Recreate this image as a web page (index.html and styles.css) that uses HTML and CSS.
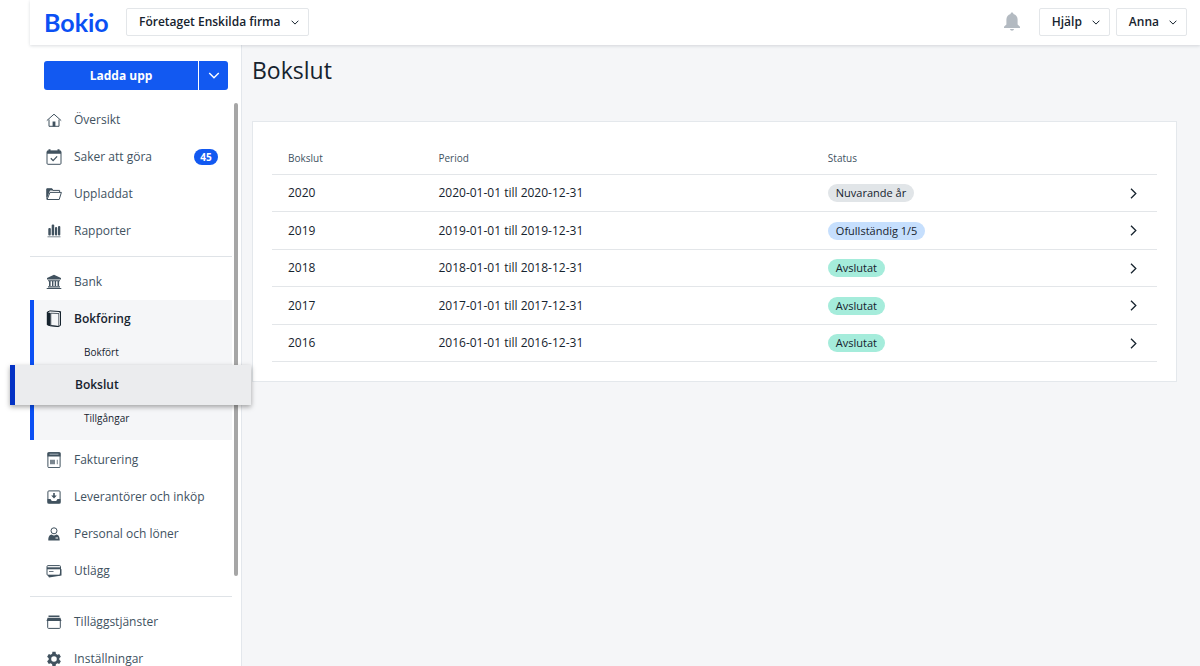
FILE: index.html
```html
<!DOCTYPE html>
<html lang="sv">
<head>
<meta charset="utf-8">
<meta name="viewport" content="width=device-width, initial-scale=1">
<title>Bokslut – Bokio</title>
<link rel="stylesheet" href="styles.css">
</head>
<body>
<svg class="defs" aria-hidden="true">
  <symbol id="chevron-down" viewBox="0 0 8 5"><path d="M.6.7 4 4.1 7.4.7" fill="none" stroke="currentColor"/></symbol>
  <symbol id="chevron-right" viewBox="0 0 7 11"><path d="M1 .8 5.8 5.5 1 10.2" fill="none" stroke="currentColor" stroke-width="1.3"/></symbol>
</svg>
<div class="app">
  <header class="topbar">
    <a class="logo" href="#">Bokio</a>
    <button class="menu-button" type="button" aria-haspopup="true">Företaget Enskilda firma <svg class="caret"><use href="#chevron-down"/></svg></button>
    <div class="topbar-right">
      <button class="bell" type="button" aria-label="Aviseringar">
        <svg width="18" height="20" viewBox="0 0 18 20" fill="currentColor"><path d="M9 .5c.9 0 1.4.6 1.4 1.4C13 2.600 14.600 4.800 14.600 7.500v5l2.400 2.200v1.200H1v-1.200l2.400-2.200v-5c0-2.700 1.600-4.900 4.200-5.600C7.600 1.100 8.100.5 9 .5zM7 17h4c-.2 1.100-1 1.700-2 1.700S7.200 18.100 7 17z"/></svg>
      </button>
      <button class="menu-button" type="button" aria-haspopup="true">Hjälp <svg class="caret"><use href="#chevron-down"/></svg></button>
      <button class="menu-button" type="button" aria-haspopup="true">Anna <svg class="caret"><use href="#chevron-down"/></svg></button>
    </div>
  </header>

  <div class="body">
    <aside class="sidebar">
      <div class="upload">
        <button class="upload-main" type="button">Ladda upp</button>
        <button class="upload-more" type="button" aria-label="Fler val"><svg width="12" height="7"><use href="#chevron-down"/></svg></button>
      </div>
      <nav class="nav">
        <ul class="nav-group">
          <li><a class="nav-link" href="#"><svg class="icon" viewBox="0 0 16 16"><path d="M.8 8.600 8 2.200l7.200 6.400M3 7.500v6.800h10V7.500" fill="none" stroke="currentColor"/><path d="M6.600 9.500h2.800v5H6.600z" fill="currentColor"/></svg>Översikt</a></li>
          <li><a class="nav-link" href="#"><svg class="icon" viewBox="0 0 16 16"><rect x="1" y="2" width="14" height="13.300" rx="1" fill="none" stroke="currentColor"/><path d="M1 1.800h1.500V.3h2v1.500h7V.3h2v1.500H15v3H1z" fill="currentColor"/><path d="m4.800 9.300 2.300 2.300 4-4.200" fill="none" stroke="currentColor" stroke-width="1.300"/></svg>Saker att göra<span class="count">45</span></a></li>
          <li><a class="nav-link" href="#"><svg class="icon" viewBox="0 0 16 16"><path d="M.9 13.300V2.900h5l1 1.500h6.700v2" fill="none" stroke="currentColor"/><path d="M.5 2.500h5.700l1 2H4L1.500 11H.5z" fill="currentColor"/><path d="M4 6.400h11.400l-2.200 7.100H1.100z" fill="none" stroke="currentColor" stroke-linejoin="round"/></svg>Uppladdat</a></li>
          <li><a class="nav-link" href="#"><svg class="icon" viewBox="0 0 16 16" fill="currentColor"><rect x="2.300" y="5" width="2.500" height="7.500" rx="1"/><rect x="5.700" y="1.500" width="2.500" height="11" rx="1"/><rect x="9" y="4" width="2.200" height="8.500" rx="1"/><rect x="12" y="3" width="2.300" height="9.500" rx="1"/><path d="M1.500 13.300h13v1h-13z" opacity=".7"/></svg>Rapporter</a></li>
        </ul>
        <ul class="nav-group">
          <li><a class="nav-link" href="#"><svg class="icon" viewBox="0 0 16 16" fill="currentColor"><path d="m8 .7 7 3.300v1.500H1V4zM2 6.200h12v1H2zM3 7h1.600v5H3zm3 0h1.400v5H6zm2.700 0h1.400v5H8.700zm2.800 0h1.600v5h-1.600zM2 12.200h12v1.200H2zm-1.300 1.700h14.600v1H.7z"/></svg>Bank</a></li>
          <li class="section">
            <a class="nav-link section-title" href="#"><svg class="icon book" viewBox="0 0 16 18"><path d="M1.300 2 4 .9l10.500.7v13.800l-2.200 1.200-8-.8-3-1z" fill="none" stroke="currentColor"/><path d="m4.800 3.200 8 .4v12.800l-8-1zM12.800 3.500l1.700-1.700" fill="none" stroke="currentColor" stroke-width=".7"/><path d="m1 2 3.500 1v13L1 14.800z" fill="currentColor"/></svg>Bokföring</a>
            <ul class="subnav">
              <li><a class="subnav-link" href="#">Bokfört</a></li>
              <li><a class="subnav-link current" href="#" aria-current="page">Bokslut</a></li>
              <li><a class="subnav-link" href="#">Tillgångar</a></li>
            </ul>
          </li>
          <li><a class="nav-link" href="#"><svg class="icon" viewBox="0 0 16 16"><rect x="1.900" y=".6" width="12.200" height="15" rx="1" fill="none" stroke="currentColor"/><path d="M1.500.5h13v4h-13z" fill="currentColor"/><path d="M3.500 2.200h9" stroke="#a9b4bd"/><path d="M4 7.700h5v4.500H4zm6.800 0h1v4.500h-1z" fill="currentColor" opacity=".7"/></svg>Fakturering</a></li>
          <li><a class="nav-link" href="#"><svg class="icon" viewBox="0 0 16 16"><rect x="1.900" y="1.900" width="12.200" height="12.200" rx="1" fill="none" stroke="currentColor"/><path d="M1.500 10h3l1.300 2h4.400l1.300-2h3v4.500h-13zM7.200 4h1.600v2.500h2L8 9.500l-2.800-3h2z" fill="currentColor"/></svg>Leverantörer och inköp</a></li>
          <li><a class="nav-link" href="#"><svg class="icon" viewBox="0 0 16 16"><circle cx="8" cy="4.800" r="3" fill="none" stroke="currentColor"/><path d="M2.300 14.500c0-4 1-5.300 3.500-5.900.7.700 1.400 1 2.200 1s1.500-.3 2.200-1c2.500.6 3.500 1.900 3.500 5.900z" fill="currentColor"/><path d="M9.500 12h2.500" stroke="#fff"/></svg>Personal och löner</a></li>
          <li><a class="nav-link" href="#"><svg class="icon" viewBox="0 0 16 16"><rect x="1" y="2.600" width="13.500" height="9.600" rx="1" fill="none" stroke="currentColor"/><path d="M1 4.300h13.500v2H1z" fill="currentColor"/><path d="M3 8.500h4.500" stroke="currentColor" stroke-width=".8"/><path d="M1.500 12h12l1.300-6 .7.200v6.300L3 14.400z" fill="currentColor"/></svg>Utlägg</a></li>
        </ul>
        <ul class="nav-group">
          <li><a class="nav-link" href="#"><svg class="icon" viewBox="0 0 16 16"><path d="M2.500 1.500h11v1.400h-11zM1.600 3.700h12.800l1.100 3.300H.5z" fill="currentColor"/><path d="M1.700 6v7.600c0 .5.300.8.800.8h11c.5 0 .8-.3.800-.8V6" fill="none" stroke="currentColor"/></svg>Tilläggstjänster</a></li>
          <li><a class="nav-link" href="#"><svg class="icon" viewBox="0 0 24 24" fill="currentColor"><path d="M19.900 13.300c.1-.4.100-.9.100-1.300s0-.9-.1-1.300l2.400-1.900-2.500-4.300-2.800 1.100c-.7-.5-1.400-1-2.200-1.300L14.400 1.300H9.600l-.4 3C8.400 4.600 7.700 5.100 7 5.600L4.200 4.500 1.700 8.800l2.400 1.900c-.1.400-.1.900-.1 1.300s0 .9.100 1.300l-2.400 1.900 2.500 4.300L7 18.400c.7.500 1.400 1 2.200 1.300l.4 3h4.800l.4-3c.8-.3 1.500-.8 2.200-1.300l2.800 1.100 2.500-4.300zM12 16.200a4.200 4.200 0 1 1 0-8.400 4.200 4.200 0 0 1 0 8.400z"/></svg>Inställningar</a></li>
        </ul>
      </nav>
      <div class="scroll-thumb"></div>
    </aside>

    <main class="main">
      <h1 class="title">Bokslut</h1>
      <section class="card">
        <table class="years">
          <thead>
            <tr><th class="col-year">Bokslut</th><th class="col-period">Period</th><th>Status</th><th class="col-open"></th></tr>
          </thead>
          <tbody>
            <tr><td>2020</td><td>2020-01-01 till 2020-12-31</td><td><span class="tag tag-grey">Nuvarande år</span></td><td class="open"><a href="#" aria-label="Öppna 2020"><svg class="arrow"><use href="#chevron-right"/></svg></a></td></tr>
            <tr><td>2019</td><td>2019-01-01 till 2019-12-31</td><td><span class="tag tag-blue">Ofullständig 1/5</span></td><td class="open"><a href="#" aria-label="Öppna 2019"><svg class="arrow"><use href="#chevron-right"/></svg></a></td></tr>
            <tr><td>2018</td><td>2018-01-01 till 2018-12-31</td><td><span class="tag tag-green">Avslutat</span></td><td class="open"><a href="#" aria-label="Öppna 2018"><svg class="arrow"><use href="#chevron-right"/></svg></a></td></tr>
            <tr><td>2017</td><td>2017-01-01 till 2017-12-31</td><td><span class="tag tag-green">Avslutat</span></td><td class="open"><a href="#" aria-label="Öppna 2017"><svg class="arrow"><use href="#chevron-right"/></svg></a></td></tr>
            <tr><td>2016</td><td>2016-01-01 till 2016-12-31</td><td><span class="tag tag-green">Avslutat</span></td><td class="open"><a href="#" aria-label="Öppna 2016"><svg class="arrow"><use href="#chevron-right"/></svg></a></td></tr>
          </tbody>
        </table>
      </section>
    </main>
  </div>
</div>
</body>
</html>
```
FILE: styles.css
```css
* { box-sizing: border-box; }

body {
  margin: 0;
  background: #fff;
  color: #16232e;
  font-family: "Open Sans", "Noto Sans", sans-serif;
  font-size: 12px;
  line-height: 16px;
}

button { font: inherit; color: inherit; cursor: pointer; }
a { color: inherit; text-decoration: none; }
ul { margin: 0; padding: 0; list-style: none; }
svg { display: block; flex: none; }
.defs { position: absolute; width: 0; height: 0; }

.app {
  display: flex;
  flex-direction: column;
  height: 100vh;
  padding-left: 30px;
  overflow: hidden;
}

/* Top bar */
.topbar {
  display: flex;
  align-items: center;
  flex: none;
  height: 45px;
  padding: 0 13px 1px 14px;
  background: #fff;
  box-shadow: 0 1px 3px rgba(30, 45, 60, .16);
  position: relative;
  z-index: 2;
}
.logo {
  width: 82px;
  color: #0b50f4;
  font-family: Lato, sans-serif;
  font-size: 25px;
  font-weight: 700;
  line-height: 28px;
}
.menu-button {
  display: flex;
  align-items: center;
  gap: 10px;
  height: 28px;
  padding: 0 9px 0 12px;
  border: 1px solid #e3e6e9;
  border-radius: 2px;
  background: #fff;
  font-weight: 600;
}
.caret { width: 8px; height: 5px; }
.topbar-right {
  display: flex;
  align-items: center;
  gap: 6px;
  margin-left: auto;
}
.bell {
  margin-right: 12px;
  padding: 0;
  border: 0;
  background: none;
  color: #b3bac1;
}

.body { display: flex; flex: 1; min-height: 0; }

/* Sidebar */
.sidebar {
  position: relative;
  z-index: 1;
  flex: none;
  width: 212px;
  padding: 16px 9px 0 0;
  border-right: 1px solid #e3e7ec;
}
.upload {
  display: flex;
  gap: 1px;
  margin: 0 4px 11px 14px;
  color: #fff;
}
.upload button {
  height: 29px;
  padding: 0;
  border: 0;
  background: #1259f1;
}
.upload .upload-main { flex: 1; border-radius: 3px 0 0 3px; font-weight: 700; }
.upload .upload-more {
  display: grid;
  place-items: center;
  width: 29px;
  border-radius: 0 3px 3px 0;
}
.nav-group + .nav-group {
  margin-top: 7px;
  padding-top: 6px;
  border-top: 1px solid #dfe3e7;
}
.nav-link {
  display: flex;
  align-items: center;
  gap: 12px;
  height: 37px;
  padding: 0 14px 0 16px;
  color: #41525f;
}
.icon { width: 16px; height: 16px; }
.icon.book { height: 18px; }
.count {
  width: 24px;
  margin-left: auto;
  border-radius: 8px;
  background: #1259f1;
  color: #fff;
  font-size: 10px;
  font-weight: 700;
  text-align: center;
}
.section {
  margin-bottom: 1px;
  border-left: 4px solid #0b50f4;
  background: #f5f6f8;
}
.section-title {
  padding-left: 12px;
  color: #16232e;
  font-weight: 600;
}
.subnav { padding: 2px 0 9px; }
.subnav-link {
  display: flex;
  align-items: center;
  height: 26px;
  padding-left: 50px;
  font-size: 10px;
}
/* The open page is lifted out over both edges of the sidebar */
.subnav-link.current {
  position: relative;
  z-index: 1;
  height: 40px;
  margin: 0 -19px 0 -24px;
  padding-left: 60px;
  border-left: 5px solid #0432c4;
  background: #ebecee;
  box-shadow: 0 2px 5px rgba(0, 0, 0, .35);
  font-size: 12px;
  font-weight: 600;
}
.scroll-thumb {
  position: absolute;
  top: 58px;
  bottom: 90px;
  right: 3px;
  width: 4px;
  border-radius: 2px;
  background: #a6a6a6;
}

/* Main */
.main {
  flex: 1;
  min-width: 0;
  padding: 9px 23px 20px 10px;
  background: #f5f6f8;
}
.title {
  margin: 0 0 35px;
  font-size: 23px;
  font-weight: 400;
  line-height: 32px;
}
.card {
  padding: 19px;
  border: 1px solid #e4e8ec;
  background: #fff;
}
.years {
  width: 100%;
  border-collapse: separate;
  border-spacing: 0;
  table-layout: fixed;
}
.years th, .years td {
  height: 37px;
  padding: 0 0 0 16px;
  border-bottom: 1px solid #e3e6e9;
  text-align: left;
  vertical-align: middle;
}
.years td { font-weight: 500; }
.years tbody tr:nth-child(even) td { height: 38px; }
.years th {
  height: 34px;
  color: #41525f;
  font-size: 10px;
  font-weight: 400;
}
.col-year { width: 17%; }
.col-period { width: 44%; }
.col-open { width: 48px; }
.years .open { padding: 0 20px 0 0; }
.open a { display: flex; justify-content: flex-end; }
.arrow { width: 7px; height: 11px; }
.tag {
  display: inline-block;
  padding: 1px 8px;
  border-radius: 9px;
  font-size: 11px;
  vertical-align: middle;
}
.tag-grey { background: #e1e5e8; }
.tag-blue { background: #c6dffd; }
.tag-green { background: #a5ecdb; }
```
